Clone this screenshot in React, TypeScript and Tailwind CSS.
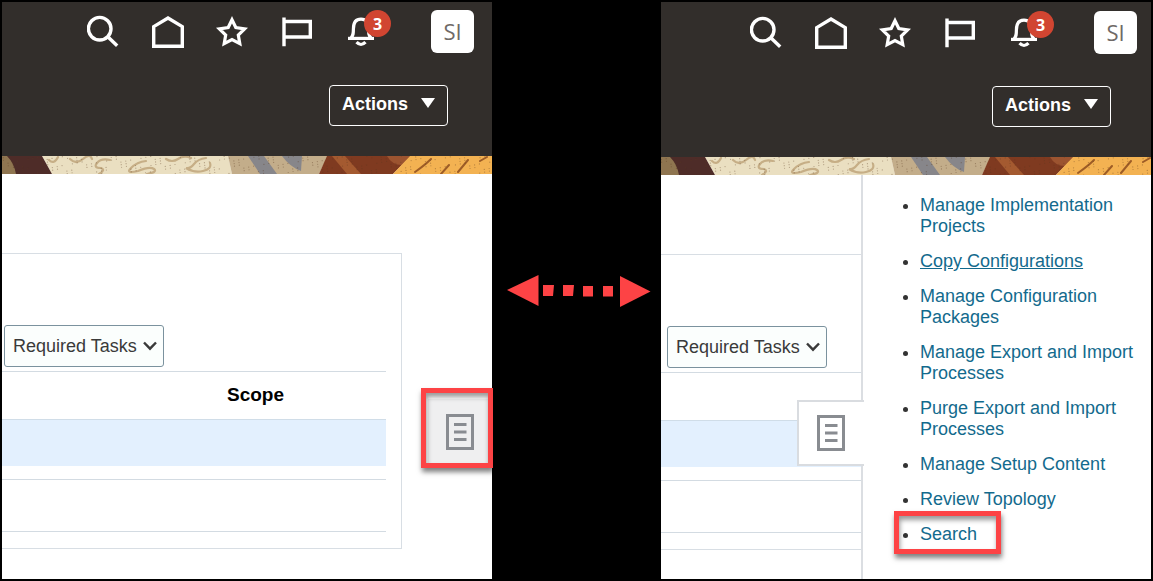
import React from "react";

const iconProps = {
  width: 36,
  height: 43,
  viewBox: "0 0 36 43",
  fill: "none",
  stroke: "#fff",
  strokeWidth: 3.4,
  "aria-hidden": true,
} as const;

function SearchIcon() {
  return (
    <svg {...iconProps}>
      <circle cx="12.7" cy="18.7" r="11.3" />
      <path d="M20.8 26.8 30.2 35.8" />
    </svg>
  );
}

function HomeIcon() {
  return (
    <svg {...iconProps}>
      <path d="M2.7 36.3V16.6L17 8l14.3 8.600v19.700z" />
    </svg>
  );
}

function StarIcon() {
  return (
    <svg {...iconProps} strokeWidth={3.2}>
      <path d="M17 9.7 20.8 17.500 29.6 18.800 23.3 25 24.800 33.600 17 29.6 9.2 33.600 10.7 25 4.4 18.800 13.2 17.500z" />
    </svg>
  );
}

function FlagIcon() {
  return (
    <svg {...iconProps}>
      <path d="M5 7.4v28.8M5 11.5h26.300V27H5" />
    </svg>
  );
}

function BellIcon() {
  return (
    <svg {...iconProps} strokeWidth={3.2}>
      <path d="M5 28.4h26" />
      <path d="M8 28c2.4-2.6 2.4-4.5 2.4-9C10.4 12.5 13.4 9.2 18 9.2s7.6 3.3 7.6 9.8c0 4.5 0 6.400 2.400 9" />
      <path d="M13.5 32.2q4.5 4.600 9 0" />
    </svg>
  );
}

function DocIcon() {
  return (
    <svg width="28" height="36" viewBox="0 0 28 36" fill="none" stroke="#898c91" strokeWidth="3" aria-hidden="true">
      <path d="M1.5 1.5h25v33h-25z" />
      <path d="M8 10.5h12.5M8 18h12.5M8 25.5h12.5" />
    </svg>
  );
}

const specks = Array.from({ length: 260 }, (_, i) => ({
  x: ((i * 137.508) % 496) - 2,
  y: (i * 7.31 + (i % 5) * 2.3) % 18,
}));

function ArtStrip({ start }: { start: number }) {
  return (
    <svg
      className="block h-[18px] w-full"
      viewBox={`${start} 0 490 18`}
      preserveAspectRatio="xMinYMin slice"
      aria-hidden="true"
    >
      <rect x="-2" width="20" height="18" fill="#8f7550" />
      <path d="M42 0H228L232 18H52z" fill="#eadfc1" />
      <path d="M7 0H42L52 18H16Q14 7 7 0z" fill="#4e2c28" />
      <path d="M228 0H328L319 18H232z" fill="#c3ad8a" />
      <path d="M248 0H264L277 18H260z" fill="#87868a" />
      <path d="M282 0H302L301 15Q290 11 282 0z" fill="#87868a" />
      <path d="M327 0H411L393 18H319z" fill="#7f3a20" />
      <path d="M332 0H345L361 18H347z" fill="#a45a30" />
      <path d="M387 0H410L402 9Q392 9 387 0z" fill="#9c5430" />
      <path d="M410 0H494V18H393z" fill="#f3b252" />
      <g fill="none" stroke="#c6ae86" strokeWidth="2.2" strokeLinecap="round">
        <path d="M49 4q5 5 9-3" />
        <path d="M70 3q6 6 13 0t9 0" />
        <path d="M110 4q-9-2-13 3t4 5q5 2-2 6" />
        <path d="M146 5q-9 1-15 7t7 3q12-5 16-2t-7 5" />
        <path d="M166 3q6 4 12 0t13-1" />
        <path d="M206 2q-8 1-12 6t-8 4q8 5 17 3t7-8" />
      </g>
      <g stroke="#9d5c26" strokeWidth="2" strokeLinecap="round" fill="none">
        <path d="M431 3Q425 9 415 16M449 9L441 18M468 4L458 16M487 1L480 5" />
      </g>
      <g fill="#5b3a20" fillOpacity="0.4">
        {specks.map((s, i) => (
          <circle key={i} cx={s.x} cy={s.y} r="0.6" />
        ))}
      </g>
    </svg>
  );
}

function IconButton({ label, children }: { label: string; children: React.ReactNode }) {
  return (
    <button type="button" aria-label={label} className="relative h-[43px] w-9">
      {children}
    </button>
  );
}

function Header({ className }: { className: string }) {
  return (
    <header className={`flex flex-col items-end bg-[#322e2b] pb-[30px] ${className}`}>
      <div className="flex gap-7">
        <IconButton label="Find">
          <SearchIcon />
        </IconButton>
        <IconButton label="Home">
          <HomeIcon />
        </IconButton>
        <IconButton label="Favorites">
          <StarIcon />
        </IconButton>
        <IconButton label="Watchlist">
          <FlagIcon />
        </IconButton>
        <IconButton label="Notifications">
          <BellIcon />
          <span className="absolute top-0 left-[21px] flex size-[27px] items-center justify-center rounded-full bg-[#d14531] font-['Open_Sans',sans-serif] text-base leading-none font-bold text-white">
            3
          </span>
        </IconButton>
        <button
          type="button"
          className="ml-6 size-[43px] rounded-md bg-white pb-0.5 font-['Open_Sans',sans-serif] text-[22px] leading-none text-[#6f6a67]"
        >
          SI
        </button>
      </div>
      <button
        type="button"
        className="mt-8 mr-[26px] flex h-[41px] items-center justify-between gap-[13px] rounded border border-white px-3 pb-1 text-lg font-bold text-white"
      >
        Actions
        <svg width="14" height="12" viewBox="0 0 14 12" aria-hidden="true">
          <path d="M0 0h14L7 10z" fill="#fff" />
        </svg>
      </button>
    </header>
  );
}

function TaskFilter({ id }: { id: string }) {
  return (
    <div className="relative w-40">
      <select
        id={id}
        aria-label="Show"
        className="block h-[42px] w-full appearance-none rounded-[3px] border border-[#7b929e] bg-[#fbfefd] pl-2 text-lg text-[#3a3a3a]"
      >
        <option>Required Tasks</option>
      </select>
      <svg
        className="pointer-events-none absolute top-4 right-[7px]"
        width="14"
        height="10"
        viewBox="0 0 14 10"
        fill="none"
        stroke="#3a3a3a"
        strokeWidth="2.4"
        aria-hidden="true"
      >
        <path d="M1 1.5 7 7.7 13 1.5" />
      </svg>
    </div>
  );
}

function TaskTable({ showScope }: { showScope: boolean }) {
  return (
    <table aria-label="Tasks" className="mt-1 w-full border-separate border-spacing-0 text-[#000]">
      <thead>
        <tr>
          <th className="h-12 w-[225px] border-t border-[#d3dbe2] p-0" />
          {showScope && (
            <th className="h-12 border-t border-[#d3dbe2] p-0 text-left text-[19px] font-bold">Scope</th>
          )}
        </tr>
      </thead>
      <tbody>
        <tr>
          <td colSpan={2} className="h-[47px] border-t border-[#d0dde8] bg-[#e3f0fe] p-0" />
        </tr>
        <tr>
          <td colSpan={2} className="h-[13px] p-0" />
        </tr>
        <tr>
          <td colSpan={2} className="h-[53px] border-y border-[#d3dbe2] p-0" />
        </tr>
      </tbody>
    </table>
  );
}

const links = [
  "Manage Implementation Projects",
  "Copy Configurations",
  "Manage Configuration Packages",
  "Manage Export and Import Processes",
  "Purge Export and Import Processes",
  "Manage Setup Content",
  "Review Topology",
  "Search",
];

const highlight =
  "pointer-events-none absolute border-[5px] border-[#fd4345] shadow-[1px_4px_5px_rgba(0,0,0,0.5),inset_1px_4px_5px_rgba(0,0,0,0.4)]";

function ClosedPanel() {
  return (
    <section className="flex flex-col bg-white">
      <Header className="pt-2 pr-[18px]" />
      <ArtStrip start={2} />
      <div className="relative grow pt-[79px]">
        <div className="mr-[90px] border-y border-r border-[#d8dee4] pt-[71px] pr-[15px] pb-4">
          <div className="pl-0.5">
            <TaskFilter id="filter-closed" />
          </div>
          <TaskTable showScope />
        </div>
        <div className="absolute top-[214px] -right-px h-20 w-[72px]">
          <button
            type="button"
            aria-label="Open tasks panel"
            className="flex size-full items-center justify-center border-t-[11px] border-l-[7px] border-white bg-[#efeff0] pr-0.5 pb-[3px]"
          >
            <DocIcon />
          </button>
          <span className={`${highlight} inset-0`} />
        </div>
      </div>
    </section>
  );
}

function OpenPanel() {
  return (
    <section className="flex flex-col bg-white">
      <Header className="pt-[9px] pr-[14px]" />
      <ArtStrip start={-2} />
      <div className="flex grow">
        <div className="min-w-0 grow pt-[79px]">
          <div className="border-y border-[#d8dee4] pt-[71px] pb-4">
            <div className="pl-1.5">
              <TaskFilter id="filter-open" />
            </div>
            <TaskTable showScope={false} />
          </div>
        </div>
        <aside className="relative w-[290px] shrink-0 border-l-2 border-[#dbdee2] bg-white">
          <button
            type="button"
            aria-label="Close tasks panel"
            className="absolute top-[225px] -left-[66px] flex h-[66px] w-[67px] items-center justify-center border-y-2 border-l-2 border-[#d9dce0] bg-white pr-0.5"
          >
            <DocIcon />
          </button>
          <ul className="flex list-disc flex-col gap-3.5 pt-5 pr-3 pl-[57px] text-lg leading-[21px] text-[#136a8d] marker:text-[#333]">
            {links.map((label) => (
              <li key={label} className="relative">
                <a href="#" className={label === "Copy Configurations" ? "underline" : ""}>
                  {label}
                </a>
                {label === "Search" && <span className={`${highlight} -top-[13px] -left-[26px] h-[43px] w-[107px]`} />}
              </li>
            ))}
          </ul>
        </aside>
      </div>
    </section>
  );
}

export default function App() {
  return (
    <main className="grid min-h-screen grid-cols-[1fr_169px_1fr] bg-black p-0.5 font-['Liberation_Sans',Arial,sans-serif]">
      <ClosedPanel />
      <div className="flex items-center justify-center pl-1">
        <svg width="144" height="33" viewBox="0 0 144 33" fill="#fd4345" aria-hidden="true">
          <path d="M0 16 31.5 1V32z" />
          <path d="M36 11h11l-1 11H36zM56 11h11l-1 11H56zM76 12h10v10.5H76zM96 12h10v10.5H96z" />
          <path d="M113 2 143.5 17.5 113 33z" />
        </svg>
      </div>
      <OpenPanel />
    </main>
  );
}
